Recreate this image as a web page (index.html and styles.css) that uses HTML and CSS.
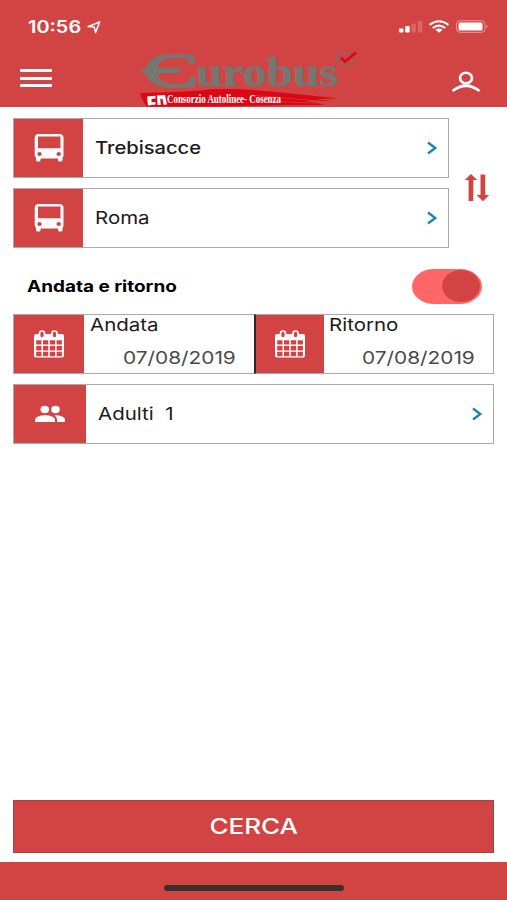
FILE: index.html
```html
<!DOCTYPE html>
<html lang="it">
<head>
    <meta charset="UTF-8">
    <title>Eurobus</title>
    <meta name="viewport" content="width=device-width, initial-scale=1.0">
    <link rel="stylesheet" href="styles.css">
</head>
<body>

<svg class="sprite">
    <symbol id="bus" viewBox="0 0 30 28">
        <path fill="#fff" fill-rule="evenodd" d="M5 0h20q4.500 0 4.500 4v17.500q0 1.500-1 2.200V26q0 1.500-1.500 1.500h-1.500q-1.500 0-1.500-1.500v-1.500H6.500V26q0 1.500-1.500 1.500H3.500Q2 27.500 2 26v-2.300q-1.300-.9-1.300-2.700V4Q.7 0 5 0zM4 2.500v11.800h22.500V2.500zM5.500 18a2.200 2 0 1 0 .01 0zM24.700 18a2.200 2 0 1 0 .01 0z"/>
    </symbol>
    <symbol id="calendar" viewBox="0 0 32 28">
        <rect x="1" y="4" width="30" height="23.500" rx="2" fill="#fff"/>
        <rect x="6.500" y="1" width="5" height="7" rx="2.400" fill="#d24444" stroke="#fff" stroke-width="1.700"/>
        <rect x="19" y="1" width="5" height="7" rx="2.400" fill="#d24444" stroke="#fff" stroke-width="1.700"/>
        <path stroke="#d24444" stroke-width="4.400" stroke-dasharray="5.300 1.500" d="M3.200 12.400h25.700M3.200 18.200h25.700M3.200 24h25.700"/>
    </symbol>
    <symbol id="arrow" viewBox="0 0 12 14">
        <path d="M2 1.500 9.300 7 2 12.500" fill="none" stroke="#1c83b0" stroke-width="2.300"/>
    </symbol>
</svg>

<div class="app">
    <header>
        <div class="status">
            <div class="time">
                <span class="wide">10:56</span>
                <svg width="14" height="13" viewBox="0 0 14 13"><path d="M1 5.600 12.600 1 8.600 11.500 7.200 6z" fill="none" stroke="#fff" stroke-width="1.500" stroke-linejoin="round"/></svg>
            </div>
            <svg width="92" height="16" viewBox="0 0 92 16">
                <rect x="1" y="8.500" width="4.500" height="4" rx="1" fill="#fff"/>
                <rect x="7.200" y="6" width="4.500" height="6.500" rx="1" fill="#fff"/>
                <rect x="13.500" y="3.500" width="4.300" height="9" rx="1" fill="#df6464"/>
                <rect x="20" y="1" width="4.300" height="11.500" rx="1" fill="#df6464"/>
                <path d="M31.500 4.800Q41 -2.300 50.500 4.800M34.800 8Q41 3.400 47.200 8" fill="none" stroke="#fff" stroke-width="2.100"/>
                <path d="M37.500 9.800Q41 7.300 44.500 9.800L41 12.800z" fill="#fff"/>
                <rect x="58.500" y=".8" width="28.500" height="11.500" rx="3.500" fill="none" stroke="#ec9b94"/>
                <rect x="60.500" y="2.500" width="24" height="8" rx="1.500" fill="#fff"/>
                <path d="M88.500 4.500q2.200 2 0 4z" fill="#ec9b94"/>
            </svg>
        </div>
        <div class="navbar">
            <div class="menu"><i></i><i></i><i></i></div>
            <svg class="logo" width="230" height="60" viewBox="0 0 230 60">
                <g class="logo-name">
                    <text class="initial" x="9" y="39.500" font-size="48" textLength="54" lengthAdjust="spacingAndGlyphs">Є</text>
                    <text x="61" y="39" font-size="42" textLength="142" lengthAdjust="spacingAndGlyphs">urobus</text>
                </g>
                <path d="M4 24.500 10 21.500H46L43 26.500H10z" fill="#757770"/>
                <path d="M5 46Q40 45 66 43.500Q90 40.500 130 44Q170 47.500 203 51.500L180 52L197 54L170 53.500L190 58L150 58Q80 60 12 59.500Q7 54 5 46z" fill="#dc0715"/>
                <path d="M120 48.500l70 6M130 54l50 2" stroke="#d4383d" stroke-width=".8"/>
                <path d="M12 49.500 20.500 48.800v2.800l-4 .4v3.200l4-.3v2.600L13 58.500zM22 48.400l8-.4 2 9.500-3.500.2-1-6-2.200.2.500 6-3.300.2z" fill="#fff"/>
                <text class="logo-tag" x="32" y="55.500" textLength="114" lengthAdjust="spacingAndGlyphs">Consorzio Autolinee- Cosenza</text>
                <path d="M216 6.500Q203 3 202 11Q203 18 212 17.500Q220 17 220.500 11" fill="none" stroke="#8f6261" stroke-width="2"/>
                <path d="M206 10.500 210 14.500 221 5.500" fill="none" stroke="#dc0715" stroke-width="2.800"/>
            </svg>
            <svg class="user" width="30" height="22" viewBox="0 0 30 22">
                <ellipse cx="15" cy="7" rx="6" ry="5.300" fill="none" stroke="#fff" stroke-width="2.600"/>
                <path d="M1.500 20Q15 9.500 28.500 20" fill="none" stroke="#fff" stroke-width="2.700"/>
            </svg>
        </div>
    </header>

    <main>
        <div class="route">
            <div class="stops">
                <div class="field">
                    <div class="icon"><svg width="30" height="28"><use href="#bus"/></svg></div>
                    <div class="value"><span class="wide medium">Trebisacce</span></div>
                    <svg class="chevron" width="12" height="14"><use href="#arrow"/></svg>
                </div>
                <div class="field">
                    <div class="icon"><svg width="30" height="28"><use href="#bus"/></svg></div>
                    <div class="value"><span class="wide">Roma</span></div>
                    <svg class="chevron" width="12" height="14"><use href="#arrow"/></svg>
                </div>
            </div>
            <svg class="swap" width="26" height="28" viewBox="0 0 26 28">
                <path d="M7 0 13.200 6H9.300v21H4.600V6H.8zM16.500.5h4.700V21h4L19 27.300 12.500 21h4z" fill="#d24444"/>
            </svg>
        </div>

        <div class="round-trip">
            <span class="wide bold">Andata e ritorno</span>
            <div class="toggle"><div class="knob"></div></div>
        </div>

        <div class="dates">
            <div class="field date">
                <div class="icon"><svg width="32" height="28"><use href="#calendar"/></svg></div>
                <div class="when">
                    <span class="wide">Andata</span>
                    <span class="wide day">07/08/2019</span>
                </div>
            </div>
            <div class="field date return">
                <div class="icon"><svg width="32" height="28"><use href="#calendar"/></svg></div>
                <div class="when">
                    <span class="wide">Ritorno</span>
                    <span class="wide day">07/08/2019</span>
                </div>
            </div>
        </div>

        <div class="field passengers">
            <div class="icon">
                <svg width="32" height="18" viewBox="0 0 32 18">
                    <ellipse cx="10.800" cy="4.500" rx="4.300" ry="3.700" fill="#fff"/>
                    <ellipse cx="21.500" cy="4.500" rx="4.300" ry="3.700" fill="#fff"/>
                    <path d="M1 17v-2.500Q2 10.500 11 10.300Q20 10.500 21 14.500V17zM20.500 10.300Q30.500 10.500 31 14.500V17H23v-2.500Q23 12 20.500 10.300z" fill="#fff"/>
                </svg>
            </div>
            <div class="value"><span class="wide">Adulti&nbsp; 1</span></div>
            <svg class="chevron" width="12" height="14"><use href="#arrow"/></svg>
        </div>

        <button class="search"><span>CERCA</span></button>
    </main>

    <footer><div class="home-bar"></div></footer>
</div>

</body>
</html>
```
FILE: styles.css
```css
* { box-sizing: border-box; }
body { margin: 0; background: #fff; color: #1b1b1b; font-family: Inter, sans-serif; font-size: 17.5px; }
svg { display: block; flex: none; }
.sprite { display: none; }
.app { display: flex; flex-direction: column; height: 900px; width: 507px; }
.wide { display: inline-block; white-space: nowrap; line-height: 20px; transform: scaleX(1.17); transform-origin: left center; }
.medium { font-weight: 500; transform: scaleX(1.15); }
.bold { font-weight: 700; font-size: 16px; color: #000; transform: scaleX(1.185); }

header { height: 107px; background: #d24444; color: #fff; }
.status { display: flex; justify-content: space-between; height: 47px; padding: 20px 17px 0 28px; }
.time { display: flex; gap: 14px; height: 14px; align-items: center; font-size: 17px; font-weight: 600; }
.navbar { display: flex; height: 60px; padding-left: 20px; }
.menu { display: flex; flex-direction: column; gap: 4.5px; width: 32px; padding-top: 22px; }
.menu i { height: 3px; background: #fff; }
.logo { margin-left: 83px; overflow: visible; }
.logo-name { font-family: "Liberation Serif", serif; font-weight: bold; fill: #757770; stroke: #757770; stroke-width: .7px; }
.initial { font-weight: normal; stroke-width: 2px; }
.logo-tag { font-family: "Liberation Serif", serif; font-weight: bold; font-size: 11.5px; fill: #fff; }
.user { margin: 24px 0 0 86px; }

main { display: flex; flex-direction: column; flex: 1; padding: 11px 13px 9px; }
.route { display: flex; align-items: center; }
.stops { display: flex; flex-direction: column; gap: 10px; width: 436px; }
.field { display: flex; align-items: center; height: 60px; border: 1px solid #aaa; background: #fff; }
.icon { display: flex; align-items: center; justify-content: center; width: 69px; height: 58px; background: #d24444; }
.value { flex: 1; padding: 0 0 2px 12px; }
.chevron { margin-right: 10px; }
.swap { margin: 10px 0 0 15px; }

.round-trip { display: flex; align-items: center; justify-content: space-between; height: 66px; padding: 10px 12px 0 14px; }
.toggle { display: flex; justify-content: flex-end; width: 70px; height: 35px; padding: 1px 2px; border-radius: 22px / 17.5px; background: #ff6668; }
.knob { width: 38px; height: 32px; border-radius: 50%; background: #d24444; }

.dates { display: flex; }
.date { width: 241px; border-right: 0; }
.return { border-left: 2px solid #3c2020; border-right: 1px solid #aaa; }
.date .icon { width: 70px; }
.when { display: flex; flex-direction: column; flex: 1; height: 58px; padding: 0 18px 0 6px; align-items: flex-start; gap: 13px; }
.day { align-self: flex-end; color: #4a4a4a; transform: scaleX(1.19); transform-origin: right center; }
.return .icon { width: 68px; }
.return .when { padding-left: 5px; }
.passengers { margin-top: 10px; }
.passengers .icon { width: 72px; }

.search { display: flex; align-items: center; justify-content: center; height: 53px; margin-top: auto; border: 1px solid #9a4845; background: #d24444; color: #fff; font: 500 21px Inter, sans-serif; }
.search span { transform: scaleX(1.24); }
footer { display: flex; justify-content: center; height: 38px; padding-top: 23px; background: #d24444; }
.home-bar { width: 180px; height: 6px; border-radius: 3px; background: #38302c; }
```
